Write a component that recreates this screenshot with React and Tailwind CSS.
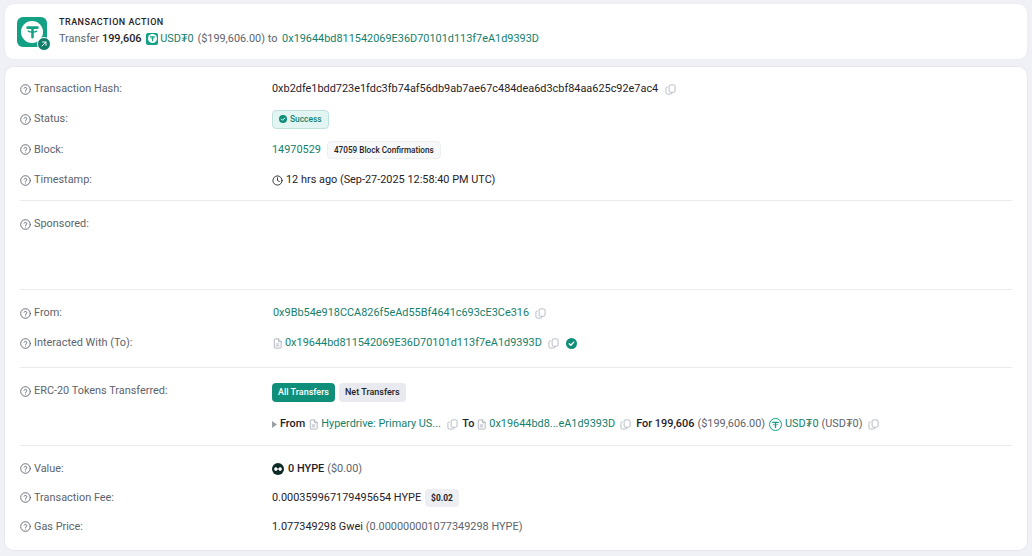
import React from "react";

const Help = () => (
  <svg width="11" height="11" viewBox="0 0 24 24" fill="none" stroke="#5f6672" strokeWidth="2" strokeLinecap="round" strokeLinejoin="round" className="shrink-0">
    <circle cx="12" cy="12" r="10.5" />
    <path d="M9 9.2a3 3 0 0 1 5.8 1c0 2-2.8 2.4-2.8 4" />
    <path d="M12 17.6h.01" />
  </svg>
);

const Copy = () => (
  <svg width="11" height="11" viewBox="0 0 24 24" fill="none" stroke="#a9afb8" strokeWidth="1.8" strokeLinejoin="round" className="shrink-0">
    <rect x="9" y="2" width="13" height="16" rx="3" />
    <path d="M6 6.5H5a3 3 0 0 0-3 3V19a3 3 0 0 0 3 3h7a3 3 0 0 0 3-3v-.5" />
  </svg>
);

const Doc = () => (
  <svg width="11" height="11" viewBox="0 0 24 24" fill="none" stroke="#a4aab3" strokeWidth="1.8" strokeLinejoin="round" strokeLinecap="round" className="shrink-0">
    <path d="M5 3.500A1.500 1.500 0 0 1 6.500 2H14l6 6v12.500a1.500 1.500 0 0 1-1.500 1.500h-12A1.500 1.500 0 0 1 5 20.500z" />
    <path d="M14 2v6h6M9 13h6M9 17h6" />
  </svg>
);

const Check = ({ size = 11 }) => (
  <svg width={size} height={size} viewBox="0 0 24 24" className="shrink-0">
    <circle cx="12" cy="12" r="12" fill="#0f8f79" />
    <path d="M7 12.500l3.500 3.500L17 9" fill="none" stroke="#fff" strokeWidth="3" strokeLinecap="round" strokeLinejoin="round" />
  </svg>
);

const TetherMark = ({ color = "#12a184" }) => (
  <>
    <path d="M5 6.500h14M12 6.500V20" fill="none" stroke={color} strokeWidth="3.600" strokeLinecap="round" />
    <path d="M6 11.500c3 1.800 9 1.800 12 0" fill="none" stroke={color} strokeWidth="1.800" strokeLinecap="round" />
  </>
);

const Row = ({ label, children, className = "h-[30px]" }) => (
  <div className={`flex items-center ${className}`}>
    <div className="flex items-center gap-[3px] w-[252px] shrink-0 text-[#5d636d]">
      <Help />
      <span>{label}</span>
    </div>
    <div className="flex items-center min-w-0">{children}</div>
  </div>
);

const Hr = () => <div className="h-px bg-[#e9ebee]" />;
const Link = ({ children }) => <span className="text-[#14806c]">{children}</span>;

export default function App() {
  return (
    <div
      className="w-[1032px] h-[556px] overflow-hidden bg-[#eff1f7] px-[4px] pt-[3px] text-[10.9px] leading-[16px] text-[#1f2228] flex flex-col gap-[6px]"
      style={{ fontFamily: 'Roboto, "Liberation Sans", sans-serif' }}
    >
      <section className="h-[57px] shrink-0 bg-white rounded-[10px] border border-[#eceef3] flex items-center pl-[12px] gap-[11px]">
        <div className="relative w-[30px] h-[30px] rounded-[6px] bg-[#12a184] flex items-center justify-center mr-px">
          <div className="w-[22px] h-[22px] rounded-full bg-white flex items-center justify-center">
            <svg width="17" height="17" viewBox="0 0 24 24">
              <TetherMark />
            </svg>
          </div>
          <div className="absolute -right-[4px] -bottom-[4px] w-[14px] h-[14px] rounded-full bg-[#0f7d69] border border-white flex items-center justify-center">
            <svg width="8" height="8" viewBox="0 0 24 24" fill="none" stroke="#fff" strokeWidth="3" strokeLinecap="round" strokeLinejoin="round">
              <path d="M6 18L18 6M8 6h10v10" />
            </svg>
          </div>
        </div>
        <div className="flex flex-col gap-[2px]">
          <div className="text-[9px] leading-[12px] font-medium tracking-[0.5px] text-[#1f2228]">TRANSACTION ACTION</div>
          <div className="flex items-center h-[17px] text-[#5d636d] whitespace-pre">
            <span>Transfer </span>
            <span className="font-medium text-[#1f2228]">199,606 </span>
            <span className="w-[12px] h-[12px] rounded-[2px] bg-[#12a184] flex items-center justify-center mx-[2px]">
              <span className="w-[9px] h-[9px] rounded-full bg-white flex items-center justify-center">
                <svg width="7" height="7" viewBox="0 0 24 24"><TetherMark /></svg>
              </span>
            </span>
            <Link>USD₮0 </Link>
            <span className="ml-px">($199,606.00) to </span>
            <span className="ml-[2px]"><Link>0x19644bd811542069E36D70101d113f7eA1d9393D</Link></span>
          </div>
        </div>
      </section>

      <section className="h-[485px] shrink-0 bg-white rounded-[10px] border border-[#e6e8ee] px-[15px] pt-[7px]">
        <Row label="Transaction Hash:">
          <span>0xb2dfe1bdd723e1fdc3fb74af56db9ab7ae67c484dea6d3cbf84aa625c92e7ac4</span>
          <span className="ml-[7px]"><Copy /></span>
        </Row>
        <Row label="Status:">
          <span className="flex items-center gap-[3px] h-[19px] px-[6px] rounded-[4px] bg-[#e3f5f2] border border-[#bfe3dc] text-[8.4px] font-medium text-[#14806c]">
            <Check size={8} />
            Success
          </span>
        </Row>
        <Row label="Block:" className="h-[31px]">
          <Link>14970529</Link>
          <span className="ml-[6px] flex items-center h-[18px] px-[6px] rounded-[4px] bg-[#f7f8f9] border border-[#eceef0] text-[8.2px] font-medium text-[#1f2228]">
            47059 Block Confirmations
          </span>
        </Row>
        <Row label="Timestamp:">
          <svg width="11" height="11" viewBox="0 0 24 24" fill="none" stroke="#23262b" strokeWidth="2" strokeLinecap="round" className="shrink-0 mr-[3px]">
            <circle cx="12" cy="12" r="10" />
            <path d="M12 6v6l4 2" />
          </svg>
          <span>12 hrs ago (Sep-27-2025 12:58:40 PM UTC)</span>
        </Row>
        <div className="pt-[5px]"><Hr /></div>
        <div className="pt-[8px] h-[88px]">
          <Row label="Sponsored:" />
        </div>
        <Hr />
        <div className="pt-[8px]">
          <Row label="From:">
            <span className="ml-px"><Link>0x9Bb54e918CCA826f5eAd55Bf4641c693cE3Ce316</Link></span>
            <span className="ml-[6px]"><Copy /></span>
          </Row>
          <Row label="Interacted With (To):">
            <Doc />
            <span className="ml-[2px]"><Link>0x19644bd811542069E36D70101d113f7eA1d9393D</Link></span>
            <span className="ml-[6px]"><Copy /></span>
            <span className="ml-[7px]"><Check /></span>
          </Row>
        </div>
        <div className="pt-[9px]"><Hr /></div>
        <div className="pt-[8px]">
          <Row label="ERC-20 Tokens Transferred:">
            <span className="mt-[2px] flex items-center h-[19px] px-[6px] rounded-[4px] bg-[#0f8f79] text-white text-[9px] font-medium">All Transfers</span>
            <span className="mt-[2px] ml-[4px] flex items-center h-[19px] px-[6px] rounded-[4px] bg-[#e8eaef] text-[#1f2228] text-[9px] font-medium">Net Transfers</span>
          </Row>
          <div className="flex items-center h-[36px] pl-[252px] whitespace-nowrap">
            <svg width="5" height="7" viewBox="0 0 5 7" className="shrink-0 mr-[3px]"><path d="M0 0l5 3.500L0 7z" fill="#9aa0a8" /></svg>
            <span className="font-medium mr-[3px]">From</span>
            <Doc />
            <span className="ml-[2px] w-[120px]"><Link>Hyperdrive: Primary US...</Link></span>
            <span className="ml-[6px]"><Copy /></span>
            <span className="ml-[4px] font-medium mr-[2px]">To</span>
            <Doc />
            <span className="ml-[2px]"><Link>0x19644bd8...eA1d9393D</Link></span>
            <span className="ml-[5px]"><Copy /></span>
            <span className="ml-[5px] font-medium">For 199,606</span>
            <span className="ml-[3px] text-[#5d636d]">($199,606.00)</span>
            <span className="ml-[4px] w-[13px] h-[13px] rounded-full border border-[#12a184] flex items-center justify-center shrink-0">
              <svg width="9" height="9" viewBox="0 0 24 24"><TetherMark /></svg>
            </span>
            <span className="ml-[3px]"><Link>USD₮0</Link></span>
            <span className="ml-[3px] text-[#5d636d]">(USD₮0)</span>
            <span className="ml-[6px]"><Copy /></span>
          </div>
        </div>
        <div className="pt-[3px]"><Hr /></div>
        <div className="pt-[8px]">
          <Row label="Value:" className="h-[29px]">
            <svg width="12" height="12" viewBox="0 0 24 24" className="shrink-0 mr-[4px]">
              <circle cx="12" cy="12" r="12" fill="#0c2a26" />
              <path d="M4 12c2-5 5-5 8 0s6 5 8 0c-2-5-5-5-8 0s-6 5-8 0z" fill="#fff" />
            </svg>
            <span className="font-medium">0 HYPE</span>
            <span className="ml-[3px] text-[#5d636d]">($0.00)</span>
          </Row>
          <Row label="Transaction Fee:" className="h-[29px]">
            <span>0.000359967179495654 HYPE</span>
            <span className="ml-[4px] flex items-center h-[18px] px-[6px] rounded-[4px] bg-[#eceef1] text-[8.4px] font-bold">$0.02</span>
          </Row>
          <Row label="Gas Price:" className="h-[29px]">
            <span>1.077349298 Gwei</span>
            <span className="ml-[3px] text-[#5d636d]">(0.000000001077349298 HYPE)</span>
          </Row>
        </div>
      </section>
    </div>
  );
}
